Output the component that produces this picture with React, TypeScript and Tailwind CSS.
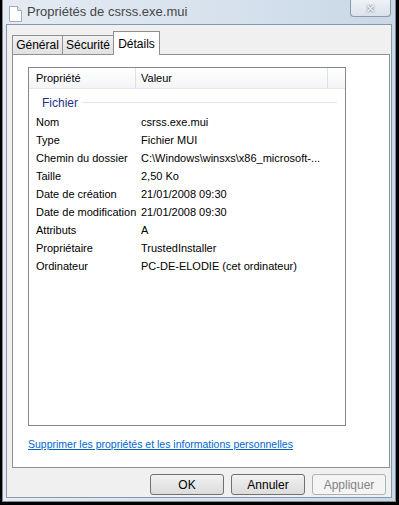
import { X } from "lucide-react";

const ROWS: [string, string][] = [
  ["Nom", "csrss.exe.mui"],
  ["Type", "Fichier MUI"],
  ["Chemin du dossier", "C:\\Windows\\winsxs\\x86_microsoft-..."],
  ["Taille", "2,50 Ko"],
  ["Date de création", "21/01/2008 09:30"],
  ["Date de modification", "21/01/2008 09:30"],
  ["Attributs", "A"],
  ["Propriétaire", "TrustedInstaller"],
  ["Ordinateur", "PC-DE-ELODIE (cet ordinateur)"],
];

const font = "font-['Liberation_Sans',Arial,sans-serif]";

function DocIcon() {
  return (
    <svg width="13" height="16" viewBox="0 0 13 16">
      <path d="M0.5 0.5 H8.5 L12.5 4.5 V15.5 H0.5 Z" fill="#fff" stroke="#a3abb4" />
      <path d="M8.5 0.5 V4.5 H12.5" fill="#e6e9ec" stroke="#a3abb4" />
    </svg>
  );
}

export default function App() {
  return (
    <div className={`w-[399px] h-[505px] bg-black pl-[2px] pr-[3px] pb-[3px] ${font}`}>
      <div className="h-full flex flex-col bg-gradient-to-r from-[#e4ebf3] via-[#d8e3ee] to-[#c9d7e6] border-l border-r border-b border-[#7f8b99] px-[3px] pb-[3px]">
        {/* title bar */}
        <div className="h-[24px] flex items-start shrink-0">
          <div className="mt-[6px] ml-[3px]">
            <DocIcon />
          </div>
          <span className="ml-[5px] mt-[4px] text-[13px] text-[#464646] leading-[16px]">
            Propriétés de csrss.exe.mui
          </span>
          <div className="ml-auto mr-[1px] w-[41px] h-[17px] rounded-b-[4px] border border-t-0 border-[#8c99a8] bg-gradient-to-b from-[#eef2f7] to-[#d9e2ec] flex items-center justify-center">
            <X size={11} strokeWidth={2.5} className="text-[#f4f6f8] drop-shadow-[0_0_1px_#4a5460]" />
          </div>
        </div>

        {/* dialog body */}
        <div className="flex-1 flex flex-col bg-[#f0f0f0] border border-[#8798ab] pl-[5px] pr-[3px]">
          {/* tabs */}
          <div className="mt-[6px] h-[23px] flex items-end text-[12px] text-black relative z-10">
            <div className="h-[19px] w-[51px] border border-[#8e8f8f] border-b-0 bg-gradient-to-b from-[#f2f2f2] to-[#e1e1e1] flex items-center justify-center">
              Général
            </div>
            <div className="h-[19px] w-[51px] border border-l-0 border-[#8e8f8f] border-b-0 bg-gradient-to-b from-[#f2f2f2] to-[#e1e1e1] flex items-center justify-center">
              Sécurité
            </div>
            <div className="h-[24px] w-[47px] -ml-[1px] -mb-[1px] border border-[#8e8f8f] border-b-0 bg-white flex items-start pt-[3px] justify-center">
              Détails
            </div>
          </div>

          {/* panel */}
          <div className="w-[378px] h-[414px] border border-[#8e8f8f] bg-white pl-[15px] pt-[12px] flex flex-col">
            {/* list view */}
            <div className="w-[318px] h-[359px] border border-[#828790] bg-white flex flex-col text-[11px] text-black">
              <div className="h-[21px] flex border-b border-[#e3e6ea] bg-gradient-to-b from-white to-[#f3f4f6]">
                <div className="w-[107px] pl-[7px] flex items-center border-r border-[#dde1e6]">Propriété</div>
                <div className="w-[192px] pl-[5px] flex items-center border-r border-[#dde1e6]">Valeur</div>
                <div className="flex-1" />
              </div>
              <div className="h-[21px] mt-[3px] flex items-center pl-[13px] pr-[8px]">
                <span className="text-[12px] text-[#1e3287]">Fichier</span>
                <div className="flex-1 h-px bg-[#e2e7ef] ml-[4px]" />
              </div>
              {ROWS.map(([k, v]) => (
                <div key={k} className="h-[18px] flex items-center">
                  <div className="w-[105px] pl-[7px] whitespace-nowrap">{k}</div>
                  <div className="pl-[7px] whitespace-nowrap">{v}</div>
                </div>
              ))}
            </div>

            <a className="mt-[10px] text-[10.5px] text-[#0066cc] underline leading-[16px]" href="#">
              Supprimer les propriétés et les informations personnelles
            </a>
          </div>

          {/* buttons */}
          <div className="flex justify-end gap-[7px] mt-[6px] pr-[2px] text-[12px]">
            <button className="w-[74px] h-[21px] rounded-[3px] border border-[#707070] bg-gradient-to-b from-[#f2f2f2] to-[#dcdcdc] text-black">
              OK
            </button>
            <button className="w-[74px] h-[21px] rounded-[3px] border border-[#707070] bg-gradient-to-b from-[#f2f2f2] to-[#dcdcdc] text-black">
              Annuler
            </button>
            <button className="w-[74px] h-[21px] rounded-[3px] border border-[#adb2b5] bg-[#f4f4f4] text-[#838383]">
              Appliquer
            </button>
          </div>
        </div>
      </div>
    </div>
  );
}
